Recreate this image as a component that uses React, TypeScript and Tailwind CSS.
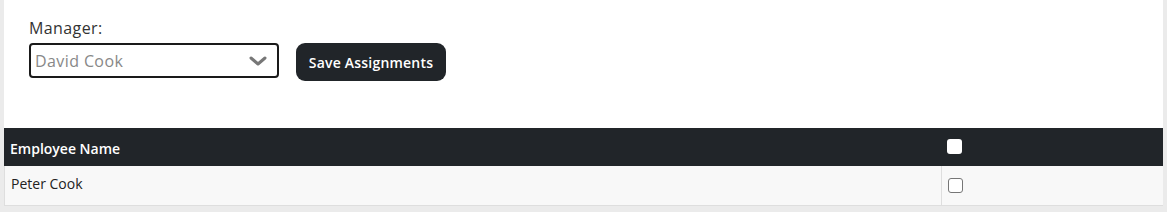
export default function App() {
  return (
    <div className="w-[1167px] h-[212px] bg-[#ebebeb] pl-[4px] pr-[4px] overflow-hidden" style={{ fontFamily: '"Open Sans", "Liberation Sans", sans-serif' }}>
      <div className="bg-white h-[206px] flex flex-col">
        <div className="pl-[25px] pt-[18px] h-[128px]">
          <div className="text-[16px] leading-[21px] text-[#333] tracking-[0.4px]">Manager:</div>
          <div className="flex items-start mt-[4px]">
            <div className="w-[250px] h-[35px] border-2 border-[#1a1a1a] rounded-[4px] flex items-center justify-between pl-[4px] pr-[10px]">
              <span className="text-[16px] text-[#888] tracking-[0.4px]">David Cook</span>
              <svg width="18" height="12" viewBox="0 0 18 12">
                <path d="M2 3 L9 9 L16 3" fill="none" stroke="#777" strokeWidth="3" strokeLinecap="round" strokeLinejoin="round" />
              </svg>
            </div>
            <button className="ml-[17px] w-[150px] h-[38px] rounded-[9px] bg-[#212529] text-white text-[14px] font-semibold tracking-[0.2px]">Save Assignments</button>
          </div>
        </div>
        <div className="flex h-[38px] bg-[#212529] text-white">
          <div className="w-[937px] pl-[6px] flex items-end pb-[7px] text-[14px] font-semibold">Employee Name</div>
          <div className="flex-1 pl-[6px] pt-[11px]">
            <div className="w-[15px] h-[15px] bg-white rounded-[3px]"></div>
          </div>
        </div>
        <div className="flex h-[40px] bg-[#f8f8f8] border-b border-l border-[#dedede]">
          <div className="w-[937px] pl-[6px] pt-[7px] text-[14px] text-[#222] border-r border-[#dedede]">Peter Cook</div>
          <div className="flex-1 pl-[6px] pt-[12px]">
            <div className="w-[15px] h-[15px] bg-white rounded-[3px] border border-[#767676]"></div>
          </div>
        </div>
      </div>
    </div>
  );
}
